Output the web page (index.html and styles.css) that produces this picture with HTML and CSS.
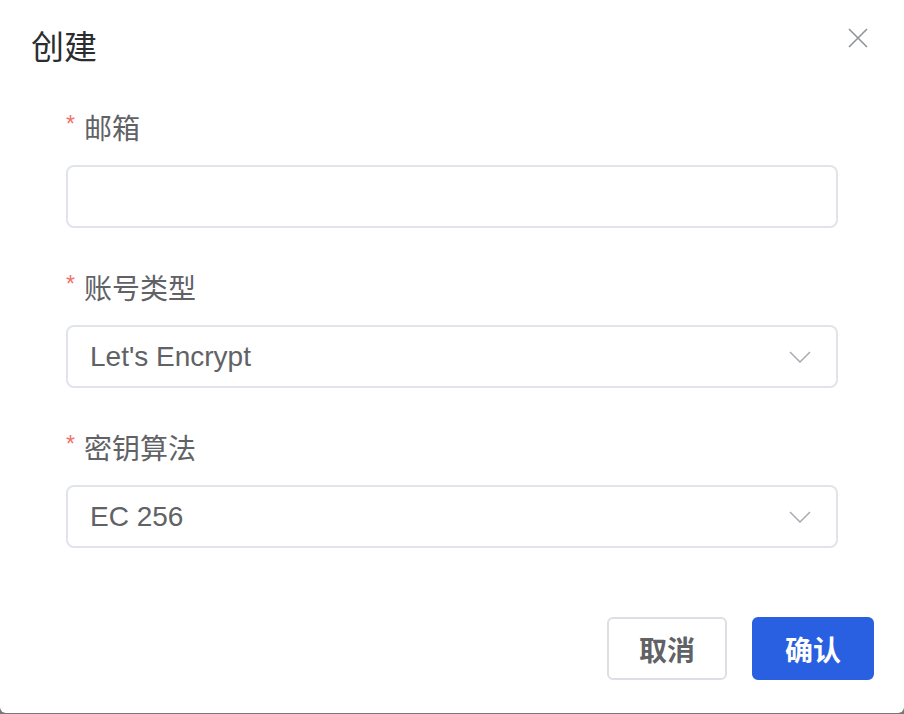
FILE: index.html
```html
<!DOCTYPE html>
<html lang="zh-CN">
<head>
<meta charset="utf-8">
<title>创建</title>
<link rel="stylesheet" href="styles.css">
</head>
<body>
<div class="dialog">
  <div class="header">
    <span class="title">创建</span>
    <button class="close" aria-label="关闭">
      <svg width="20" height="20" viewBox="0 0 20 20"><path d="M1 1 L19 19 M19 1 L1 19" stroke="#909399" stroke-width="1.6" fill="none"/></svg>
    </button>
  </div>
  <form class="form">
    <div class="item">
      <label class="label"><span class="req">*</span>邮箱</label>
      <div class="control"></div>
    </div>
    <div class="item">
      <label class="label"><span class="req">*</span>账号类型</label>
      <div class="control select">
        <span class="value">Let's Encrypt</span>
        <svg class="chev" width="22" height="12" viewBox="0 0 22 12"><path d="M1 1 L11 11 L21 1" stroke="#a8abb2" stroke-width="1.5" fill="none"/></svg>
      </div>
    </div>
    <div class="item">
      <label class="label"><span class="req">*</span>密钥算法</label>
      <div class="control select">
        <span class="value">EC 256</span>
        <svg class="chev" width="22" height="12" viewBox="0 0 22 12"><path d="M1 1 L11 11 L21 1" stroke="#a8abb2" stroke-width="1.5" fill="none"/></svg>
      </div>
    </div>
  </form>
  <div class="footer">
    <button class="btn btn-default">取消</button>
    <button class="btn btn-primary">确认</button>
  </div>
</div>
</body>
</html>
```
FILE: styles.css
```css
html, body {
  margin: 0;
  padding: 0;
}
body {
  background: #777777;
  font-family: "Liberation Sans", "Noto Sans CJK SC", sans-serif;
  width: 904px;
  height: 714px;
  overflow: hidden;
}
.dialog {
  height: 713px;
  background: #ffffff;
  border-radius: 0 0 6px 6px;
  display: flex;
  flex-direction: column;
  box-sizing: border-box;
}
.header {
  display: flex;
  justify-content: space-between;
  align-items: flex-start;
  padding: 28px 36px 0 31px;
  height: 96px;
  box-sizing: border-box;
}
.title {
  font-size: 33px;
  line-height: 40px;
  color: #2b2d30;
}
.close {
  width: 20px;
  height: 20px;
  padding: 0;
  border: none;
  background: none;
  display: block;
}
.close svg {
  display: block;
}
.form {
  padding: 9px 66px 0 66px;
  margin: 0;
}
.item {
  margin-bottom: 37px;
}
.label {
  display: flex;
  align-items: center;
  height: 44px;
  font-size: 28px;
  color: #606266;
  margin-bottom: 16px;
}
.req {
  color: #f56c6c;
  margin-right: 9px;
  font-size: 23px;
  position: relative;
  top: -3px;
}
.control {
  height: 63px;
  box-sizing: border-box;
  border: 2px solid #e1e4e9;
  border-radius: 8px;
  background: #fff;
}
.select {
  display: flex;
  align-items: center;
  justify-content: space-between;
  padding: 0 25px 0 22px;
}
.value {
  font-size: 28px;
  color: #606266;
}
.chev {
  display: block;
}
.footer {
  display: flex;
  justify-content: flex-end;
  gap: 25px;
  padding: 32px 30px 0 0;
}
.btn {
  width: 120px;
  height: 63px;
  box-sizing: border-box;
  border-radius: 6px;
  font-family: "Liberation Sans", "Noto Sans CJK SC", sans-serif;
  font-size: 28px;
  font-weight: 700;
  padding: 0;
}
.btn-default {
  background: #fff;
  border: 2px solid #dcdfe6;
  color: #606266;
}
.btn-primary {
  width: 122px;
  background: #295fe1;
  border: 2px solid #295fe1;
  color: #ffffff;
}
```
